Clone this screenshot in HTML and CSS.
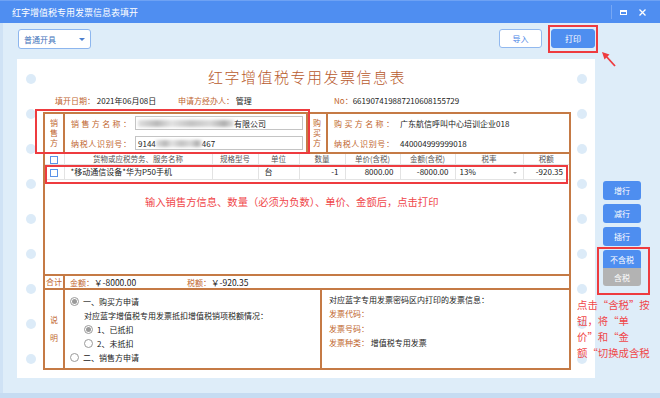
FILE: index.html
```html
<!DOCTYPE html>
<html lang="zh-CN">
<head>
  <meta charset="UTF-8">
  <title>红字增值税专用发票信息表填开</title>
  <link rel="stylesheet" href="styles.css">
</head>
<body>
  <div class="titlebar">
    <span>红字增值税专用发票信息表填开</span>
    <div class="winctl">
      <span class="sep"></span>
      <span class="max"></span>
      <svg class="close" width="7" height="7" viewBox="0 0 7 7"><path d="M0.5 0.5L6.5 6.5M6.5 0.5L0.5 6.5" stroke="#fff" stroke-width="1.3"/></svg>
    </div>
  </div>

  <div class="main">
    <div class="toolbar">
      <div class="select">普通开具<span class="caret"></span></div>
      <div class="actions">
        <button class="btn ghost">导入</button>
        <button class="btn primary">打印</button>
      </div>
    </div>

    <div class="work">
      <div class="paper">
        <div class="holes">
          <span></span><span></span><span></span><span></span><span></span><span></span><span></span><span></span><span></span>
        </div>

        <div class="sheet">
          <div class="doc-title">红字增值税专用发票信息表</div>
          <div class="meta">
            <div class="m1"><span class="b">填开日期：</span> 2021年06月08日</div>
            <div class="m2"><span class="b">申请方经办人：</span> 管理</div>
            <div><span class="b">No：</span>661907419887210608155729</div>
          </div>

          <div class="form">
            <div class="party">
              <div class="vlabel">销<br>售<br>方</div>
              <div class="pcontent seller">
                <div class="prow"><span class="lbl">销售方名称：</span><div class="input"><span class="blur w96"></span>有限公司</div></div>
                <div class="prow"><span class="lbl">纳税人识别号：</span><div class="input">9144<span class="blur w46"></span>467</div></div>
              </div>
              <div class="vlabel">购<br>买<br>方</div>
              <div class="pcontent buyer">
                <div class="prow"><span class="lbl">购买方名称：</span><span class="val">广东航信呼叫中心培训企业018</span></div>
                <div class="prow"><span class="lbl">纳税人识别号：</span><span class="val">440004999999018</span></div>
              </div>
            </div>

            <div class="goods">
              <table>
                <colgroup>
                  <col style="width:19px"><col style="width:148px"><col style="width:46px"><col style="width:41px"><col style="width:46px"><col style="width:55px"><col style="width:55px"><col style="width:68px"><col style="width:46px">
                </colgroup>
                <tr>
                  <th><span class="chk"></span></th>
                  <th>货物或应税劳务、服务名称</th>
                  <th>规格型号</th>
                  <th>单位</th>
                  <th>数量</th>
                  <th>单价(含税)</th>
                  <th>金额(含税)</th>
                  <th>税率</th>
                  <th>税额</th>
                </tr>
                <tr>
                  <td class="c"><span class="chk"></span></td>
                  <td class="l">*移动通信设备*华为P50手机</td>
                  <td></td>
                  <td class="l">台</td>
                  <td class="r">-1</td>
                  <td class="r">8000.00</td>
                  <td class="r">-8000.00</td>
                  <td class="l rate">13%<span class="dd"></span></td>
                  <td class="r">-920.35</td>
                </tr>
              </table>
              <div class="tip">输入销售方信息、数量（必须为负数）、单价、金额后，点击打印</div>
            </div>

            <div class="total">
              <div class="vlabel">合计</div>
              <div class="sum">
                <span class="b">金额：</span><span class="amt">￥-8000.00</span>
                <span class="b tax">税额：</span><span>￥-920.35</span>
              </div>
            </div>

            <div class="notes">
              <div class="vlabel note-l">说<br>明</div>
              <div class="nleft">
                <div class="nrow"><span class="radio on"></span>一、购买方申请</div>
                <div class="nrow in1">对应蓝字增值税专用发票抵扣增值税销项税额情况：</div>
                <div class="nrow in1"><span class="radio on"></span>1、已抵扣</div>
                <div class="nrow in1"><span class="radio"></span>2、未抵扣</div>
                <div class="nrow"><span class="radio"></span>二、销售方申请</div>
              </div>
              <div class="nright">
                <div class="nrow">对应蓝字专用发票密码区内打印的发票信息：</div>
                <div class="nrow"><span class="b">发票代码：</span></div>
                <div class="nrow"><span class="b">发票号码：</span></div>
                <div class="nrow"><span class="b">发票种类：</span>&nbsp;增值税专用发票</div>
              </div>
            </div>
          </div>
        </div>

        <div class="holes r">
          <span></span><span></span><span></span><span></span><span></span><span></span><span></span><span></span><span></span>
        </div>
      </div>

      <div class="side">
        <button class="sbtn">增行</button>
        <button class="sbtn">减行</button>
        <button class="sbtn">插行</button>
        <div class="taxgroup">
          <button class="sbtn on">不含税</button>
          <button class="sbtn off">含税</button>
        </div>
      </div>
    </div>

    <div class="mark m-print"></div>
    <div class="mark m-seller"></div>
    <div class="mark m-row"></div>
    <div class="mark m-side"></div>
    <svg class="arrow" width="18" height="18" viewBox="0 0 18 18">
      <path d="M15 16L5 5" stroke="#ee3b3f" stroke-width="1.8"/>
      <path d="M2 2L9.5 4.5L4.5 9.5Z" fill="#ee3b3f"/>
    </svg>
    <div class="side-note">点击“含税”按<br>钮，将“单<br>价”和“金<br>额“切换成含税</div>
  </div>
</body>
</html>
```

FILE: styles.css
```css
* {
  box-sizing: border-box;
}

body {
  margin: 0;
  width: 660px;
  height: 398px;
  overflow: hidden;
  font-family: "Noto Sans CJK SC", "Noto Sans", sans-serif;
  font-size: 8px;
  color: #222;
  background: #deedf9;
}

.titlebar {
  height: 23px;
  background: #4f8ef1;
  border-top: 1px solid #6ea2f4;
  display: flex;
  align-items: center;
  justify-content: space-between;
  padding-left: 12px;
  color: #fff;
  font-size: 9px;
}
.winctl {
  display: flex;
  align-items: center;
}
.winctl .sep {
  width: 1px;
  height: 14px;
  background: #77a7f4;
  margin-right: 8px;
}
.winctl .max {
  width: 7px;
  height: 5px;
  border: 1px solid #fff;
  border-top-width: 2px;
  margin-right: 12px;
}
.winctl .close {
  margin-right: 14px;
}

.main {
  position: relative;
  height: 375px;
  border-bottom: 5px solid #c6dcf2;
  box-shadow: inset 3px 0 #cfe2f5;
}

.toolbar {
  height: 36px;
  display: flex;
  justify-content: space-between;
  align-items: flex-start;
  padding: 6px 65px 0 18px;
}
.select {
  width: 73px;
  height: 20px;
  border: 1px solid #8db6ee;
  border-radius: 3px;
  background: #fff;
  color: #3f72ba;
  display: flex;
  align-items: center;
  justify-content: space-between;
  padding: 0 5px 0 5px;
}
.caret {
  border-left: 3px solid transparent;
  border-right: 3px solid transparent;
  border-top: 3px solid #4a7fd0;
}
.actions {
  display: flex;
  gap: 9px;
}
.btn {
  height: 19px;
  border-radius: 3px;
  font-family: inherit;
  font-size: 8px;
  padding: 0;
}
.btn.ghost {
  width: 43px;
  background: #fff;
  border: 1px solid #92b9ef;
  color: #4a85e6;
}
.btn.primary {
  width: 44px;
  background: #4e8ef0;
  border: 1px solid #4e8ef0;
  color: #fff;
}

.work {
  display: flex;
  height: 319px;
}
.paper {
  margin-left: 17px;
  width: 578px;
  background: #fff;
  display: flex;
}
.holes {
  width: 26px;
  padding: 15px 0 0 9px;
  display: flex;
  flex-direction: column;
  gap: 25px;
}
.holes span {
  width: 10px;
  height: 10px;
  border-radius: 50%;
  background: #dcebf8;
}
.holes.r {
  width: 24px;
  padding-left: 6px;
}

.sheet {
  width: 528px;
  padding-top: 8px;
}
.doc-title {
  text-align: center;
  font-size: 15px;
  font-weight: 300;
  line-height: 20px;
  letter-spacing: 1.5px;
  color: #b85a2c;
}
.meta {
  margin-top: 8px;
  height: 12px;
  line-height: 12px;
  display: flex;
  padding-left: 12px;
}
.meta .m1 {
  width: 123px;
}
.meta .m2 {
  width: 156px;
}
.b {
  color: #c0652e;
}

.form {
  margin-top: 5px;
  border: 2px solid #c57a45;
}
.vlabel {
  width: 20px;
  flex-shrink: 0;
  border-right: 2px solid #c57a45;
  display: flex;
  align-items: center;
  justify-content: center;
  text-align: center;
  color: #c0652e;
  font-size: 8px;
  line-height: 10px;
}

.party {
  display: flex;
  height: 40px;
  border-bottom: 2px solid #c57a45;
}
.pcontent {
  display: flex;
  flex-direction: column;
  gap: 2px;
  padding-left: 6px;
}
.seller {
  width: 243px;
  border-right: 2px solid #c57a45;
}
.buyer {
  flex: 1;
}
.prow {
  height: 18px;
  display: flex;
  align-items: center;
}
.lbl {
  width: 60px;
  color: #c0652e;
  text-align-last: justify;
}
.input {
  margin-left: 4px;
  width: 168px;
  height: 14px;
  border: 1px solid #c4c4c4;
  display: flex;
  align-items: center;
  padding-left: 2px;
}
.blur {
  height: 7px;
  background: linear-gradient(90deg, #e0e0e0, #b9b9b9 20%, #e2e2e2 35%, #c3c3c3 55%, #d9d9d9 75%, #afafaf 90%, #e4e4e4);
  filter: blur(1.5px);
}
.w96 {
  width: 96px;
}
.w46 {
  width: 46px;
}
.val {
  margin-left: 6px;
}

.goods {
  height: 122px;
  border-bottom: 2px solid #c57a45;
}
table {
  width: 524px;
  border-collapse: collapse;
  table-layout: fixed;
}
th {
  height: 10px;
  padding: 0;
  font-weight: normal;
  font-size: 7.5px;
  line-height: 9px;
  color: #555;
  border-right: 1px solid #e3e3e3;
  border-bottom: 1px solid #e3e3e3;
}
td {
  height: 15px;
  padding: 0 6px;
  border-right: 1px solid #e3e3e3;
  border-bottom: 1px solid #e3e3e3;
  white-space: nowrap;
}
th:last-child,
td:last-child {
  border-right: none;
}
td.c {
  padding: 0;
  text-align: center;
}
td.l {
  text-align: left;
}
td.r {
  text-align: right;
}
td.rate {
  padding-left: 4px;
}
.chk {
  display: inline-block;
  width: 8px;
  height: 8px;
  border: 1px solid #5b93e8;
  background: #fff;
  vertical-align: middle;
}
.dd {
  float: right;
  margin-top: 6px;
  border-left: 2px solid transparent;
  border-right: 2px solid transparent;
  border-top: 2px solid #aaa;
}
.tip {
  margin-top: 15px;
  padding-left: 100px;
  font-size: 10.3px;
  line-height: 14px;
  color: #f0474a;
}

.total {
  display: flex;
  height: 14px;
  border-bottom: 2px solid #c57a45;
}
.sum {
  display: flex;
  align-items: center;
  padding-left: 5px;
  font-size: 8.5px;
}
.sum .b {
  font-size: 8px;
}
.sum .amt {
  width: 93px;
}

.notes {
  display: flex;
  height: 78px;
}
.note-l {
  line-height: 18px;
}
.nleft {
  width: 257px;
  border-right: 2px solid #c57a45;
  padding: 4px 0 0 5px;
}
.nright {
  flex: 1;
  padding: 2px 0 0 7px;
}
.nright .nrow {
  height: 14.5px;
}
.nrow {
  height: 14px;
  display: flex;
  align-items: center;
}
.nrow.in1 {
  padding-left: 14px;
}
.radio {
  width: 9px;
  height: 9px;
  border-radius: 50%;
  border: 1px solid #9a9a9a;
  margin-right: 4px;
  display: flex;
  align-items: center;
  justify-content: center;
}
.radio.on::after {
  content: "";
  width: 5px;
  height: 5px;
  border-radius: 50%;
  background: #9a9a9a;
}

.side {
  width: 65px;
  padding: 122px 0 0 8px;
  display: flex;
  flex-direction: column;
  gap: 4px;
}
.sbtn {
  width: 38px;
  height: 19px;
  border: none;
  border-radius: 3px;
  background: #4e8ef0;
  color: #fff;
  font-family: inherit;
  font-size: 8px;
  padding: 0;
}
.taxgroup {
  display: flex;
  flex-direction: column;
}
.taxgroup .sbtn {
  height: 18px;
}
.sbtn.on {
  border-radius: 3px 3px 0 0;
}
.sbtn.off {
  border-radius: 0 0 3px 3px;
  background: #b3b3b3;
}

.mark {
  position: absolute;
  border: 2px solid #ee3b3f;
}
.m-print {
  left: 548px;
  top: 2px;
  width: 50px;
  height: 28px;
}
.m-seller {
  left: 35px;
  top: 86px;
  width: 275px;
  height: 45px;
}
.m-row {
  left: 45px;
  top: 142px;
  width: 523px;
  height: 19px;
}
.m-side {
  left: 597px;
  top: 224px;
  width: 53px;
  height: 48px;
}
.arrow {
  position: absolute;
  left: 600px;
  top: 27px;
}
.side-note {
  position: absolute;
  left: 577px;
  top: 274px;
  font-size: 10.4px;
  line-height: 16px;
  color: #f0474a;
  white-space: nowrap;
}
```
